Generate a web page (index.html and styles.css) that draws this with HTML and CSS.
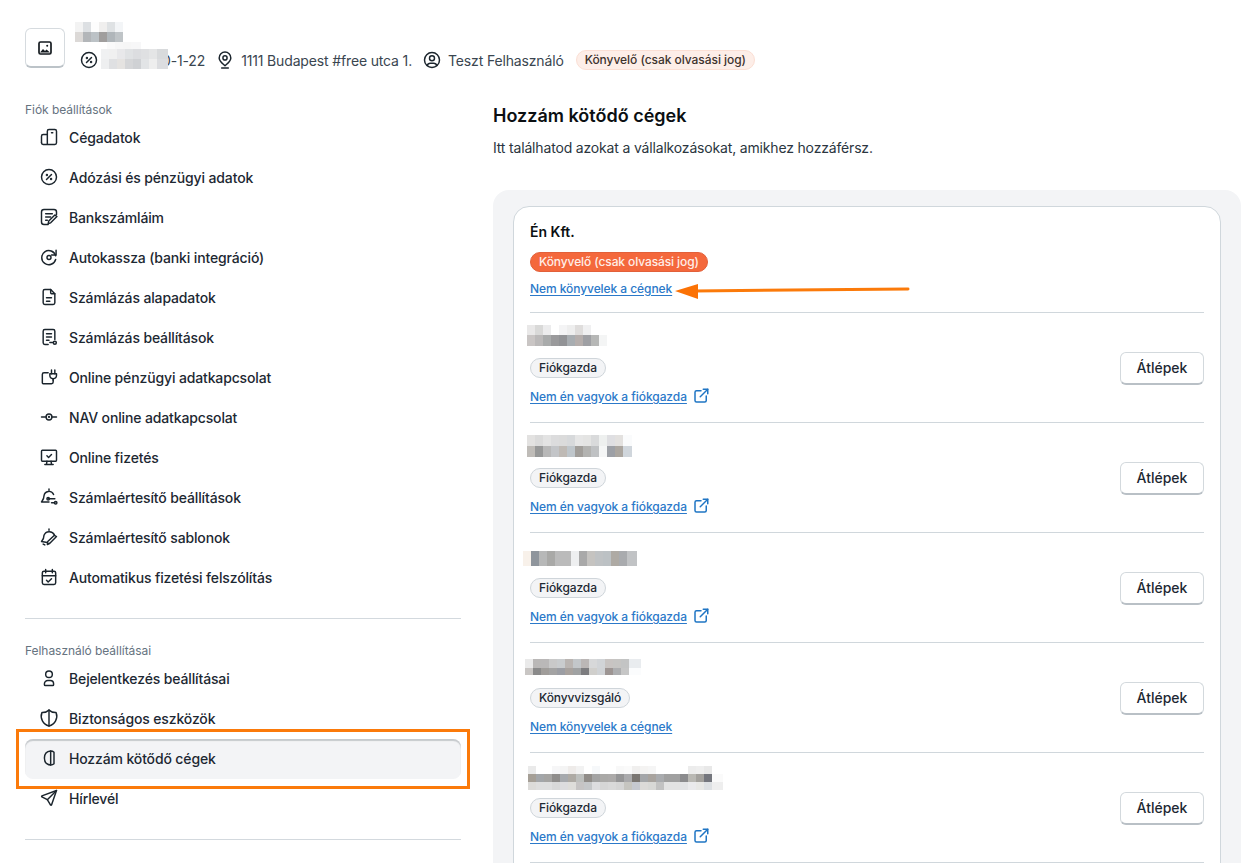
FILE: index.html
```html
<!DOCTYPE html>
<html lang="hu">
<head>
<meta charset="utf-8">
<title>Hozzám kötődő cégek</title>
<link rel="stylesheet" href="styles.css">
</head>
<body>
<div class="page">
  <header class="header">
    <button class="logo-btn" type="button" aria-label="Logó">
      <svg class="logo-icon" viewBox="0 0 14 14"><rect x="1" y="1" width="12" height="12" rx="1.5" fill="none" stroke="#141a1f" stroke-width="1.7"/><path d="M2 11.5l3-3.5 2 2 1.5-1.5 3.5 3z" fill="#141a1f"/><circle cx="9.2" cy="4.8" r="1" fill="#141a1f"/></svg>
    </button>
    <div class="head-info">
      <div class="head-name">
        <svg class="mosaic" width="48" height="20"><rect x="0" y="0" width="8" height="10" fill="#f3f3f3"/><rect x="8" y="0" width="8" height="10" fill="#dde0e3"/><rect x="16" y="0" width="8" height="10" fill="#fdfdfd"/><rect x="24" y="0" width="8" height="10" fill="#f0efee"/><rect x="32" y="0" width="8" height="10" fill="#dfe2e4"/><rect x="40" y="0" width="8" height="10" fill="#f3f5f7"/><rect x="0" y="10" width="8" height="10" fill="#dcd9d7"/><rect x="8" y="10" width="8" height="10" fill="#b3b6b9"/><rect x="16" y="10" width="8" height="10" fill="#bcc2c6"/><rect x="24" y="10" width="8" height="10" fill="#a09e9d"/><rect x="32" y="10" width="8" height="10" fill="#b0b6ba"/><rect x="40" y="10" width="8" height="10" fill="#bfc4c7"/></svg>
      </div>
      <div class="meta">
        <span class="meta-item">
          <svg class="meta-icon" viewBox="0 0 24 24"><circle cx="12" cy="12" r="9"/><path d="M9 15l6-6"/><circle cx="9.5" cy="9.5" r=".6"/><circle cx="14.5" cy="14.5" r=".6"/></svg>
          <span class="tax">0-1-22
            <svg class="tax-mosaic" width="67" height="27"><rect x="6" y="0" width="8" height="7" fill="#fafafa"/><rect x="14" y="0" width="8" height="7" fill="#f7f7f7"/><rect x="22" y="0" width="8" height="7" fill="#f6f6f6"/><rect x="30" y="0" width="10" height="7" fill="#f7f7f8"/><rect x="0" y="7" width="8" height="10" fill="#f0f1f2"/><rect x="8" y="7" width="8" height="10" fill="#f0f0f0"/><rect x="16" y="7" width="8" height="10" fill="#e8e8ea"/><rect x="24" y="7" width="8" height="10" fill="#e0e2e4"/><rect x="32" y="7" width="8" height="10" fill="#dcdde0"/><rect x="40" y="7" width="8" height="10" fill="#dfe0e2"/><rect x="48" y="7" width="8" height="10" fill="#e4e5e6"/><rect x="56" y="7" width="11" height="10" fill="#d8dadc"/><rect x="0" y="17" width="8" height="10" fill="#eeeff0"/><rect x="8" y="17" width="8" height="10" fill="#dfe0e2"/><rect x="16" y="17" width="8" height="10" fill="#e5e3e1"/><rect x="24" y="17" width="8" height="10" fill="#d5d6d8"/><rect x="32" y="17" width="8" height="10" fill="#cfd1d4"/><rect x="40" y="17" width="8" height="10" fill="#e2e4e6"/><rect x="48" y="17" width="8" height="10" fill="#eeeeee"/><rect x="56" y="17" width="11" height="10" fill="#dcdde0"/></svg>
          </span>
        </span>
        <span class="meta-item">
          <svg class="meta-icon" viewBox="0 0 24 24"><circle cx="12" cy="9.5" r="2.5"/><path d="M12 2.5a7 7 0 0 1 7 7c0 3.800-4 6.600-7 9.500-3-2.900-7-5.700-7-9.500a7 7 0 0 1 7-7z"/><path d="M8 21.500h8"/></svg>
          1111 Budapest #free utca 1.
        </span>
        <span class="meta-item">
          <svg class="meta-icon" viewBox="0 0 24 24"><circle cx="12" cy="12" r="9"/><circle cx="12" cy="10" r="3"/><path d="M6.200 18.800A4 4 0 0 1 10 16h4a4 4 0 0 1 3.800 2.800"/></svg>
          Teszt Felhasználó
        </span>
        <span class="badge badge-soft">Könyvelő (csak olvasási jog)</span>
      </div>
    </div>
  </header>

  <div class="layout">
    <aside class="sidebar">
      <div class="side-label">Fiók beállítások</div>
      <nav class="side-list">
        <a class="side-item"><svg class="side-icon" viewBox="0 0 24 24"><path d="M3 19V11a2 2 0 0 1 2-2h5"/><path d="M10 21V5a2 2 0 0 1 2-2h7a2 2 0 0 1 2 2v14a2 2 0 0 1-2 2H5a2 2 0 0 1-2-2"/><path d="M15 7h1.500"/></svg>Cégadatok</a>
        <a class="side-item"><svg class="side-icon" viewBox="0 0 24 24"><circle cx="12" cy="12" r="9"/><path d="M9 15l6-6"/><circle cx="9.500" cy="9.500" r=".6"/><circle cx="14.500" cy="14.500" r=".6"/></svg>Adózási és pénzügyi adatok</a>
        <a class="side-item"><svg class="side-icon" viewBox="0 0 24 24"><path d="M11 21H6a3 3 0 0 1-3-3V6a3 3 0 0 1 3-3h12a3 3 0 0 1 3 3v3"/><path d="M8 8h8M8 12h6M8 16h2"/><path d="M21.500 11.500l-7.500 7.500-3 1 .7-3.300 7.300-7.200z"/></svg>Bankszámláim</a>
        <a class="side-item"><svg class="side-icon" viewBox="0 0 24 24"><path d="M20 10.500A8.500 8.500 0 1 0 20 15"/><path d="M20.500 4v5.500H15"/><circle cx="12" cy="12.500" r="2.400"/></svg>Autokassza (banki integráció)</a>
        <a class="side-item"><svg class="side-icon" viewBox="0 0 24 24"><path d="M14 3v4a1 1 0 0 0 1 1h4"/><path d="M17 21H7a2 2 0 0 1-2-2V5a2 2 0 0 1 2-2h7l5 5v11a2 2 0 0 1-2 2z"/><path d="M9 13h6M9 17h4"/></svg>Számlázás alapadatok</a>
        <a class="side-item"><svg class="side-icon" viewBox="0 0 24 24"><path d="M11 21H7a2 2 0 0 1-2-2V5a2 2 0 0 1 2-2h10a2 2 0 0 1 2 2v10"/><path d="M9 8h6M9 12h6M9 16h3"/><path d="M13 18.500h3.500"/><circle cx="19" cy="19" r="1.800"/></svg>Számlázás beállítások</a>
        <a class="side-item"><svg class="side-icon" viewBox="0 0 24 24"><path d="M11 7H6a2 2 0 0 0-2 2v10a1 1 0 0 0 1 1h10a2 2 0 0 0 2-2v-3"/><path d="M13 8h8v2a4 4 0 0 1-8 0z"/><path d="M15 8V3.500M19 8V3.500M17 14v2"/></svg>Online pénzügyi adatkapcsolat</a>
        <a class="side-item"><svg class="side-icon" viewBox="0 0 24 24"><circle cx="12" cy="12" r="3.500"/><circle cx="12" cy="12" r=".5"/><path d="M3 12h5.500M15.500 12H21"/></svg>NAV online adatkapcsolat</a>
        <a class="side-item"><svg class="side-icon" viewBox="0 0 24 24"><rect x="3" y="4" width="18" height="13" rx="1"/><path d="M7 21h10M9.500 17l-.5 4M14.500 17l.5 4"/><path d="M9.500 10.500l2 2 3.500-3.500"/></svg>Online fizetés</a>
        <a class="side-item"><svg class="side-icon" viewBox="0 0 24 24"><path d="M12 2.500v1.500"/><path d="M17.500 9A6 6 0 0 0 6 10.500c0 4-1.500 5.500-3 7.500h9"/><path d="M11 14h8"/><circle cx="11" cy="14" r="1.500"/><path d="M15 19h4"/><circle cx="20" cy="19" r="1.500"/></svg>Számlaértesítő beállítások</a>
        <a class="side-item"><svg class="side-icon" viewBox="0 0 24 24"><path d="M12 2.500v1.500"/><path d="M18.500 9.500A6.800 6.800 0 0 0 6 10c0 4-1.500 6-3 7.500l7 1"/><path d="M21 11.500l-8 8-3 1.500.5-3.500 8-7.500z"/><path d="M5 20.500l2 1"/></svg>Számlaértesítő sablonok</a>
        <a class="side-item"><svg class="side-icon" viewBox="0 0 24 24"><rect x="4" y="5" width="16" height="16" rx="2"/><path d="M16 3v4M8 3v4M4 10.500h16"/><path d="M9 16l2 2 4-4"/></svg>Automatikus fizetési felszólítás</a>
      </nav>
      <hr class="side-rule">
      <div class="side-label side-label-next">Felhasználó beállításai</div>
      <nav class="side-list">
        <a class="side-item"><svg class="side-icon" viewBox="0 0 24 24"><circle cx="12" cy="7.500" r="4"/><path d="M7.500 21a1 1 0 0 1-1-1v-1a4 4 0 0 1 4-4h3a4 4 0 0 1 4 4v1a1 1 0 0 1-1 1z"/></svg>Bejelentkezés beállításai</a>
        <a class="side-item"><svg class="side-icon" viewBox="0 0 24 24"><path d="M12 2.500a12 12 0 0 0 8.500 3 12 12 0 0 1-8.500 16 12 12 0 0 1-8.500-16 12 12 0 0 0 8.500-3z"/><path d="M12 2.500v19"/></svg>Biztonságos eszközök</a>
        <a class="side-item side-item-active"><svg class="side-icon" viewBox="0 0 24 24"><path d="M14 3.500C9 4 6.500 7.500 6.500 12s2.500 8 7.500 8.500c1.500 0 3-.5 4-1.500V5c-1-1-2.500-1.500-4-1.500z"/><path d="M14 3.500v17"/></svg>Hozzám kötődő cégek</a>
        <a class="side-item"><svg class="side-icon" viewBox="0 0 24 24"><path d="M10 14L21 3"/><path d="M21 3l-6 17.500a.6.6 0 0 1-1.100 0L10 14l-6.500-3.400a.6.6 0 0 1 0-1.100z"/></svg>Hírlevél</a>
      </nav>
      <hr class="side-rule">
    </aside>

    <main class="main">
      <h1 class="title">Hozzám kötődő cégek</h1>
      <p class="subtitle">Itt találhatod azokat a vállalkozásokat, amikhez hozzáférsz.</p>
      <section class="panel">
        <div class="card">
          <div class="row row-first">
            <div class="row-info">
              <div class="company">Én Kft.</div>
              <span class="badge badge-strong">Könyvelő (csak olvasási jog)</span>
              <div class="row-link row-link-first"><a class="link">Nem könyvelek a cégnek</a></div>
            </div>
          </div>

          <div class="row">
            <div class="row-info">
              <div class="company">
                <svg class="mosaic m-a" width="80" height="21"><rect x="0" y="0" width="8" height="10" fill="#e9e8e8"/><rect x="8" y="0" width="8" height="10" fill="#d9d9d8"/><rect x="16" y="0" width="8" height="10" fill="#ececed"/><rect x="32" y="0" width="8" height="10" fill="#f4f4f5"/><rect x="40" y="0" width="8" height="10" fill="#eeeeee"/><rect x="48" y="0" width="8" height="10" fill="#dfdddc"/><rect x="56" y="0" width="8" height="10" fill="#f0f0f1"/><rect x="0" y="10" width="8" height="11" fill="#c9c5c4"/><rect x="8" y="10" width="8" height="11" fill="#bbb9b9"/><rect x="16" y="10" width="8" height="11" fill="#a9abab"/><rect x="24" y="10" width="8" height="11" fill="#9a9a9c"/><rect x="32" y="10" width="8" height="11" fill="#929396"/><rect x="40" y="10" width="8" height="11" fill="#a8adb1"/><rect x="48" y="10" width="8" height="11" fill="#b5aeac"/><rect x="56" y="10" width="8" height="11" fill="#9fa0a4"/><rect x="64" y="10" width="8" height="11" fill="#b6b7b6"/><rect x="72" y="10" width="8" height="11" fill="#f4f5f5"/></svg>
              </div>
              <span class="badge badge-plain">Fiókgazda</span>
              <div class="row-link"><a class="link">Nem én vagyok a fiókgazda</a><svg class="ext" viewBox="0 0 24 24"><path d="M12 5H6a2 2 0 0 0-2 2v11a2 2 0 0 0 2 2h11a2 2 0 0 0 2-2v-6"/><path d="M11 13l10-10"/><path d="M15 3h6v6"/></svg></div>
            </div>
            <button class="btn" type="button">Átlépek</button>
          </div>

          <div class="row">
            <div class="row-info">
              <div class="company">
                <svg class="mosaic m-b" width="105" height="22"><rect x="0" y="0" width="8" height="11" fill="#e3e2e1"/><rect x="8" y="0" width="8" height="11" fill="#dbdbdb"/><rect x="16" y="0" width="8" height="11" fill="#e3e3e3"/><rect x="24" y="0" width="8" height="11" fill="#dcdcdd"/><rect x="32" y="0" width="8" height="11" fill="#dbdbdb"/><rect x="40" y="0" width="8" height="11" fill="#d7d9db"/><rect x="48" y="0" width="8" height="11" fill="#e6e6e6"/><rect x="56" y="0" width="8" height="11" fill="#e4e4e3"/><rect x="64" y="0" width="8" height="11" fill="#d9dadb"/><rect x="72" y="0" width="8" height="11" fill="#eef0ef"/><rect x="80" y="0" width="8" height="11" fill="#dfdfe2"/><rect x="88" y="0" width="8" height="11" fill="#e3e1df"/><rect x="96" y="0" width="9" height="11" fill="#fafbfc"/><rect x="0" y="11" width="8" height="11" fill="#bfbcb8"/><rect x="8" y="11" width="8" height="11" fill="#979898"/><rect x="16" y="11" width="8" height="11" fill="#b8b8b8"/><rect x="24" y="11" width="8" height="11" fill="#c3c5c8"/><rect x="32" y="11" width="8" height="11" fill="#bfbab5"/><rect x="40" y="11" width="8" height="11" fill="#bfc6cb"/><rect x="48" y="11" width="8" height="11" fill="#a19e9a"/><rect x="56" y="11" width="8" height="11" fill="#b3b3b1"/><rect x="64" y="11" width="8" height="11" fill="#bfc1c3"/><rect x="72" y="11" width="8" height="11" fill="#f5f6f6"/><rect x="80" y="11" width="8" height="11" fill="#9da0a6"/><rect x="88" y="11" width="8" height="11" fill="#aba6a0"/><rect x="96" y="11" width="9" height="11" fill="#d0d6dc"/></svg>
              </div>
              <span class="badge badge-plain">Fiókgazda</span>
              <div class="row-link"><a class="link">Nem én vagyok a fiókgazda</a><svg class="ext" viewBox="0 0 24 24"><path d="M12 5H6a2 2 0 0 0-2 2v11a2 2 0 0 0 2 2h11a2 2 0 0 0 2-2v-6"/><path d="M11 13l10-10"/><path d="M15 3h6v6"/></svg></div>
            </div>
            <button class="btn" type="button">Átlépek</button>
          </div>

          <div class="row">
            <div class="row-info">
              <div class="company">
                <svg class="mosaic m-c" width="114" height="15"><rect x="0" y="0" width="8" height="15" fill="#f8f1ea"/><rect x="8" y="0" width="8" height="15" fill="#8f959c"/><rect x="16" y="0" width="8" height="15" fill="#b7b8b8"/><rect x="24" y="0" width="8" height="15" fill="#a9a9a7"/><rect x="32" y="0" width="8" height="15" fill="#bbbbbb"/><rect x="40" y="0" width="8" height="15" fill="#bbbbbb"/><rect x="48" y="0" width="8" height="15" fill="#eeeff0"/><rect x="56" y="0" width="8" height="15" fill="#a9a9a9"/><rect x="64" y="0" width="8" height="15" fill="#c5c3c0"/><rect x="72" y="0" width="8" height="15" fill="#bfc2c4"/><rect x="80" y="0" width="8" height="15" fill="#bcc1c4"/><rect x="88" y="0" width="8" height="15" fill="#aeaaa4"/><rect x="96" y="0" width="8" height="15" fill="#a9abae"/><rect x="104" y="0" width="10" height="15" fill="#c1c3c5"/></svg>
              </div>
              <span class="badge badge-plain">Fiókgazda</span>
              <div class="row-link"><a class="link">Nem én vagyok a fiókgazda</a><svg class="ext" viewBox="0 0 24 24"><path d="M12 5H6a2 2 0 0 0-2 2v11a2 2 0 0 0 2 2h11a2 2 0 0 0 2-2v-6"/><path d="M11 13l10-10"/><path d="M15 3h6v6"/></svg></div>
            </div>
            <button class="btn" type="button">Átlépek</button>
          </div>

          <div class="row">
            <div class="row-info">
              <div class="company">
                <svg class="mosaic m-d" width="116" height="16"><rect x="0" y="0" width="8" height="9" fill="#eaeaea"/><rect x="8" y="0" width="8" height="9" fill="#bab8b7"/><rect x="16" y="0" width="8" height="9" fill="#bab8b8"/><rect x="24" y="0" width="8" height="9" fill="#c9c9c9"/><rect x="32" y="0" width="8" height="9" fill="#c9ccce"/><rect x="40" y="0" width="8" height="9" fill="#bab5b2"/><rect x="48" y="0" width="8" height="9" fill="#c3c7ca"/><rect x="56" y="0" width="8" height="9" fill="#bbb7b6"/><rect x="64" y="0" width="8" height="9" fill="#d7d8d9"/><rect x="72" y="0" width="8" height="9" fill="#d1d4d7"/><rect x="80" y="0" width="8" height="9" fill="#c8c4c2"/><rect x="88" y="0" width="8" height="9" fill="#c6c5c3"/><rect x="96" y="0" width="8" height="9" fill="#c3c4c4"/><rect x="104" y="0" width="12" height="9" fill="#e9ecef"/><rect x="0" y="9" width="8" height="7" fill="#c9c6c4"/><rect x="8" y="9" width="8" height="7" fill="#8a8a8a"/><rect x="16" y="9" width="8" height="7" fill="#a09d9a"/><rect x="24" y="9" width="8" height="7" fill="#a3a3a3"/><rect x="32" y="9" width="8" height="7" fill="#9c9ea4"/><rect x="40" y="9" width="8" height="7" fill="#a8a29e"/><rect x="48" y="9" width="8" height="7" fill="#a0a2a3"/><rect x="56" y="9" width="8" height="7" fill="#7d7d80"/><rect x="64" y="9" width="8" height="7" fill="#d0cfcc"/><rect x="72" y="9" width="8" height="7" fill="#d0d3d6"/><rect x="80" y="9" width="8" height="7" fill="#9d9593"/><rect x="88" y="9" width="8" height="7" fill="#adaeb0"/><rect x="96" y="9" width="8" height="7" fill="#c6c6c6"/><rect x="104" y="9" width="12" height="7" fill="#fbfcfd"/></svg>
              </div>
              <span class="badge badge-plain">Könyvvizsgáló</span>
              <div class="row-link"><a class="link">Nem könyvelek a cégnek</a></div>
            </div>
            <button class="btn" type="button">Átlépek</button>
          </div>

          <div class="row">
            <div class="row-info">
              <div class="company">
                <svg class="mosaic m-e" width="195" height="24"><rect x="0" y="0" width="8" height="8" fill="#eaeaea"/><rect x="24" y="0" width="8" height="8" fill="#f6f6f7"/><rect x="32" y="0" width="8" height="8" fill="#f4f4f4"/><rect x="40" y="0" width="8" height="8" fill="#eeebe9"/><rect x="48" y="0" width="8" height="8" fill="#f2f2f2"/><rect x="64" y="0" width="8" height="8" fill="#f6f8fa"/><rect x="88" y="0" width="8" height="8" fill="#f8f8f8"/><rect x="96" y="0" width="8" height="8" fill="#fafafa"/><rect x="104" y="0" width="8" height="8" fill="#f0efee"/><rect x="112" y="0" width="8" height="8" fill="#f4f3f2"/><rect x="120" y="0" width="8" height="8" fill="#f5f5f5"/><rect x="160" y="0" width="8" height="8" fill="#ececec"/><rect x="168" y="0" width="8" height="8" fill="#eeeeee"/><rect x="176" y="0" width="8" height="8" fill="#e8e8e8"/><rect x="0" y="8" width="8" height="8" fill="#a59f96"/><rect x="8" y="8" width="8" height="8" fill="#a3a6a9"/><rect x="16" y="8" width="8" height="8" fill="#a5a4a2"/><rect x="24" y="8" width="8" height="8" fill="#8f8d8b"/><rect x="32" y="8" width="8" height="8" fill="#a6a9ad"/><rect x="40" y="8" width="8" height="8" fill="#aeaaa4"/><rect x="48" y="8" width="8" height="8" fill="#bdbfbd"/><rect x="56" y="8" width="8" height="8" fill="#908c88"/><rect x="64" y="8" width="8" height="8" fill="#a3a3a3"/><rect x="72" y="8" width="8" height="8" fill="#aaa9a7"/><rect x="80" y="8" width="8" height="8" fill="#acaaa9"/><rect x="88" y="8" width="8" height="8" fill="#959596"/><rect x="96" y="8" width="8" height="8" fill="#aaaaac"/><rect x="104" y="8" width="8" height="8" fill="#7a7672"/><rect x="112" y="8" width="8" height="8" fill="#a4a6a9"/><rect x="120" y="8" width="8" height="8" fill="#a8a39e"/><rect x="128" y="8" width="8" height="8" fill="#a9abae"/><rect x="136" y="8" width="8" height="8" fill="#a0a0a0"/><rect x="144" y="8" width="8" height="8" fill="#a0a0a0"/><rect x="152" y="8" width="8" height="8" fill="#8b8b8d"/><rect x="160" y="8" width="8" height="8" fill="#b9b8b3"/><rect x="168" y="8" width="8" height="8" fill="#a3a19d"/><rect x="176" y="8" width="8" height="8" fill="#74767d"/><rect x="184" y="8" width="11" height="8" fill="#fafafa"/><rect x="0" y="16" width="8" height="8" fill="#dcdbd9"/><rect x="8" y="16" width="8" height="8" fill="#dedede"/><rect x="16" y="16" width="8" height="8" fill="#dedede"/><rect x="24" y="16" width="8" height="8" fill="#d8d8d8"/><rect x="32" y="16" width="8" height="8" fill="#dcdcde"/><rect x="40" y="16" width="8" height="8" fill="#deddda"/><rect x="48" y="16" width="8" height="8" fill="#c6c4c4"/><rect x="56" y="16" width="8" height="8" fill="#c5c7c9"/><rect x="64" y="16" width="8" height="8" fill="#dddddf"/><rect x="72" y="16" width="8" height="8" fill="#d6d6d6"/><rect x="80" y="16" width="8" height="8" fill="#d9d9d9"/><rect x="88" y="16" width="8" height="8" fill="#d5d5d5"/><rect x="96" y="16" width="8" height="8" fill="#c6c5c0"/><rect x="104" y="16" width="8" height="8" fill="#c6c9d0"/><rect x="112" y="16" width="8" height="8" fill="#dcdad8"/><rect x="120" y="16" width="8" height="8" fill="#d8d8d6"/><rect x="128" y="16" width="8" height="8" fill="#c2c2c2"/><rect x="136" y="16" width="8" height="8" fill="#e3e3e3"/><rect x="144" y="16" width="8" height="8" fill="#e3e3e3"/><rect x="152" y="16" width="8" height="8" fill="#e2e3e5"/><rect x="160" y="16" width="8" height="8" fill="#eaeaec"/><rect x="168" y="16" width="8" height="8" fill="#e8e8e6"/><rect x="176" y="16" width="8" height="8" fill="#dde0e3"/><rect x="184" y="16" width="11" height="8" fill="#eeeeee"/></svg>
              </div>
              <span class="badge badge-plain">Fiókgazda</span>
              <div class="row-link"><a class="link">Nem én vagyok a fiókgazda</a><svg class="ext" viewBox="0 0 24 24"><path d="M12 5H6a2 2 0 0 0-2 2v11a2 2 0 0 0 2 2h11a2 2 0 0 0 2-2v-6"/><path d="M11 13l10-10"/><path d="M15 3h6v6"/></svg></div>
            </div>
            <button class="btn" type="button">Átlépek</button>
          </div>
        </div>
      </section>
    </main>
  </div>

  <div class="mark-box"></div>
  <svg class="mark-arrow" width="240" height="20" viewBox="0 0 240 20"><path d="M234 5L20 7" stroke="#fb7a0a" stroke-width="3" stroke-linecap="round" fill="none"/><path d="M1 7L24 0v15z" fill="#fb7205"/></svg>
</div>
</body>
</html>
```
FILE: styles.css
```css
* { box-sizing: border-box; }
html, body { margin: 0; padding: 0; height: 100%; overflow: hidden; background: #fff; }
body { font-family: Inter, "Noto Sans", "Liberation Sans", sans-serif; font-size: 14px; color: #1d2832; }

.page { position: relative; height: 863px; overflow: hidden; padding: 22px 17px 0 25px; }

/* header */
.header { display: flex; align-items: flex-start; height: 80px; }
.logo-btn { width: 40px; height: 40px; margin-top: 6px; padding: 0; display: flex; align-items: center; justify-content: center; background: #fff; border: 1px solid #d6dbdf; border-bottom: 2px solid #bcc3c8; border-radius: 6px; flex: none; }
.logo-icon { width: 14px; height: 14px; display: block; }
.head-info { margin-left: 10px; }
.head-name { height: 20px; }
.mosaic { display: block; overflow: visible; shape-rendering: crispEdges; }
.meta { display: flex; align-items: center; height: 36px; margin-left: 6px; color: #3a4650; letter-spacing: -0.15px; }
.meta-item { display: inline-flex; align-items: center; white-space: nowrap; margin-right: 12px; }
.meta-icon { width: 20px; height: 20px; margin: 0 6px 0 -2px; fill: none; stroke: #1b252d; stroke-width: 1.75; stroke-linecap: round; stroke-linejoin: round; flex: none; }
.tax { position: relative; padding-left: 57px; }
.tax-mosaic { position: absolute; left: -4px; top: 50%; margin-top: -18px; shape-rendering: crispEdges; }

.badge { display: inline-flex; align-items: center; align-self: flex-start; height: 20px; padding: 0 8px 1px; border-radius: 10px; border: 1px solid; font-size: 12px; font-weight: 500; letter-spacing: -0.1px; white-space: nowrap; }
.badge-soft { align-self: center; letter-spacing: -0.05px; background: #fdeee8; border-color: #fbdfd4; color: #3d332e; }
.badge-strong { background: #f4683c; border-color: #e2603a; color: #ffeee8; }
.badge-plain { background: #f3f4f6; border-color: #cfd5da; color: #1d2832; }

/* layout */
.layout { display: grid; grid-template-columns: 436px 748px; column-gap: 32px; }

/* sidebar */
.side-label { height: 16px; line-height: 16px; font-size: 12px; color: #66737f; letter-spacing: -0.05px; }
.side-label-next { margin-top: 24px; }
.side-list { display: flex; flex-direction: column; }
.side-item { display: flex; align-items: center; height: 40px; padding: 0 0 2px 14px; color: #1d2832; font-weight: 500; letter-spacing: -0.14px; border-radius: 8px; }
.side-item-active { background: #f3f4f6; box-shadow: inset 0 2px 1px #c6cacd; }
.side-icon { width: 20px; height: 20px; margin-right: 10px; fill: none; stroke: #1b252d; stroke-width: 1.75; stroke-linecap: round; stroke-linejoin: round; flex: none; }
.side-rule { height: 1px; margin: 20px 0 0; border: 0; background: #d3d9de; }

/* main */
.title { margin: 0; font-size: 18px; line-height: 28px; font-weight: 600; color: #0b0f12; }
.subtitle { margin: 8px 0 0; line-height: 20px; color: #2b3640; letter-spacing: -0.17px; }
.panel { margin-top: 32px; padding: 16px 20px 20px; background: #f3f4f6; border-radius: 16px; }
.card { padding: 0 16px 20px; background: #fff; border: 1px solid #d0d7dc; border-radius: 16px; }
.row { display: flex; align-items: center; justify-content: space-between; padding: 15px 0 16px; border-bottom: 1px solid #d0d7dc; }
.row-info { display: flex; flex-direction: column; }
.company { height: 20px; line-height: 20px; margin-bottom: 10px; font-weight: 600; color: #0b0f12; }
.row-link { display: flex; align-items: center; height: 20px; margin-top: 8px; }
.row-link-first { height: 16px; }
.link { font-size: 12px; font-weight: 500; letter-spacing: -0.07px; color: #2b79c9; text-decoration: underline; text-underline-offset: 2px; }
.ext { width: 18px; height: 18px; margin-left: 5px; fill: none; stroke: #1f75c4; stroke-width: 2; stroke-linecap: round; stroke-linejoin: round; }
.btn { width: 84px; height: 33px; margin-top: 2px; padding: 0; background: #fff; border: 1px solid #d3d9dd; border-bottom: 2px solid #b9c0c6; border-radius: 6px; font: 500 14px Inter, sans-serif; color: #1d2832; }

.m-a { margin: -3px 0 0 -3px; }
.m-b { margin: -3px 0 0 -3px; }
.m-c { margin: 3px 0 0 -7px; }
.m-d { margin: 1px 0 0 -5px; }
.m-e { margin: -2px 0 0 -2px; }

/* annotation overlay */
.mark-box { position: absolute; left: 16px; top: 729px; width: 454px; height: 60px; border: 3.500px solid #fb7a0a; }
.mark-arrow { position: absolute; left: 674px; top: 284px; }
```
